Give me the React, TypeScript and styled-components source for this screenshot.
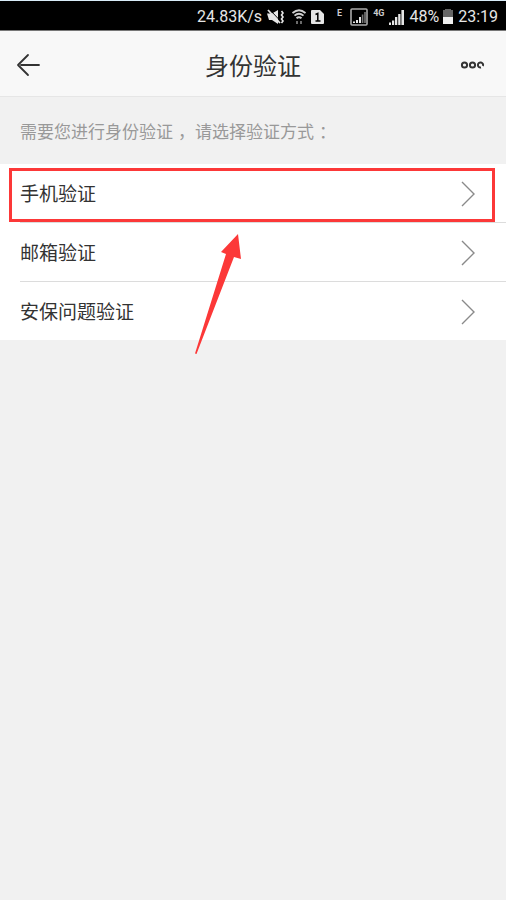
import React from "react";
import styled, { createGlobalStyle } from "styled-components";

const Global = createGlobalStyle`
  * { box-sizing: border-box; }
  body {
    margin: 0;
    background: #f1f1f1;
    font-family: Roboto, "Noto Sans CJK SC", sans-serif;
    color: #333;
  }
  button { font: inherit; color: inherit; background: none; border: 0; padding: 0; cursor: pointer; }
  svg { display: block; flex: none; }
`;

const Screen = styled.div`
  min-height: 100vh;
`;

const StatusBar = styled.div`
  height: 31px;
  display: flex;
  align-items: center;
  justify-content: flex-end;
  padding: 2px 8px 0 0;
  background: #000;
  border-top: 1px solid #d9ecf8;
  border-bottom: 1px solid #777;
  color: #e6e6e6;
  font-size: 16px;
  line-height: 28px;
  white-space: nowrap;
`;

const StatusItem = styled.span<{ $gap: number }>`
  margin-left: ${(p) => p.$gap}px;
`;

const NetLabel = styled.span<{ $gap: number }>`
  margin-left: ${(p) => p.$gap}px;
  align-self: flex-start;
  font-size: 9px;
  line-height: 21px;
  font-weight: 700;
  color: #ccc;
`;

const NavBar = styled.header`
  display: grid;
  grid-template-columns: 80px 1fr 80px;
  align-items: center;
  height: 66px;
  padding-top: 2px;
  background: #f8f8f8;
  border-bottom: 1px solid #e6e6e6;
`;

const NavButton = styled.button<{ $end?: boolean }>`
  display: flex;
  align-items: center;
  height: 60px;
  && { padding: 0 ${(p) => (p.$end ? 21 : 0)}px 0 ${(p) => (p.$end ? 0 : 16)}px; }
  justify-content: ${(p) => (p.$end ? "flex-end" : "flex-start")};
`;

const Title = styled.h1`
  margin: 0;
  padding-top: 4px;
  text-align: center;
  font-size: 24px;
  line-height: 36px;
  font-weight: 400;
`;

const Hint = styled.p`
  margin: 0;
  padding: 22px 20px 18px;
  font-size: 17px;
  line-height: 27px;
  color: #999;
`;

const Punct = styled.span`
  padding-left: 5px;
`;

const List = styled.ul`
  margin: 0;
  padding: 0 0 0 20px;
  list-style: none;
  background: #fff;
`;

const Item = styled.li`
  position: relative;
  & + & { border-top: 1px solid #dcdcdc; }
`;

const ItemButton = styled.button`
  display: flex;
  align-items: center;
  justify-content: space-between;
  width: 100%;
  height: 58px;
  && { padding: 2px 30px 0 0; }
  text-align: left;
`;

const ItemLabel = styled.span`
  padding-top: 2px;
  font-size: 19px;
  line-height: 28px;
`;

const Highlight = styled.div`
  position: absolute;
  top: 4px;
  left: -11px;
  right: 11px;
  bottom: 0;
  border: 3px solid #fc3838;
  pointer-events: none;
`;

const Pointer = styled.svg`
  position: absolute;
  top: 69px;
  left: 174px;
  z-index: 1;
  pointer-events: none;
`;

const BoxedSignal = () => (
  <svg width="18" height="18" viewBox="0 0 18 18" fill="#e6e6e6" aria-hidden="true">
    <rect x="1" y="1" width="16" height="16" rx="1" fill="none" stroke="#aaa" strokeWidth="1.6" />
    <path d="M3 13.500h2V15H3zM6 12h2v3H6zM9 9h2v6H9z" />
    <path d="M11.800 6.500h1.600V15h-1.600zM14.200 4h1.600v11h-1.600z" fill="#777" />
  </svg>
);

const Signal = () => (
  <svg width="15" height="16" viewBox="0 0 15 16" fill="#e6e6e6" aria-hidden="true">
    <path d="M0 13.500h2V16H0zM3 11.500h2.200V16H3zM6 8h2.300v8H6zM9.200 5h2.300v11H9.200zM12.400 1H15v15h-2.600z" />
  </svg>
);

const MuteIcon = () => (
  <svg width="18" height="16" viewBox="0 0 18 16" fill="#e6e6e6" aria-hidden="true">
    <path d="M0 4.500h5L11 1v14l-6-4H2z" />
    <path d="M3 1l10 10.500" stroke="#000" strokeWidth="1" />
    <path d="M1 1l12 13" stroke="#e6e6e6" strokeWidth="1.8" />
    <path d="M14.500 2l1.500 2-1.500 2 1.500 2-1.500 2 1.500 2-1.500 2" fill="none" stroke="#e6e6e6" strokeWidth="1.6" />
  </svg>
);

const WifiIcon = () => (
  <svg width="14" height="16" viewBox="0 0 14 16" fill="none" stroke="#d0d0d0" strokeWidth="1.8" aria-hidden="true">
    <path d="M.500 4Q7-1.500 13.500 4M2.500 6.700q4.500-4 9 0M4.500 9.300q2.500-2.200 5 0" />
    <path d="M5 12v3M9 12v3" stroke="#777" />
  </svg>
);

const SimIcon = () => (
  <svg width="13" height="14" viewBox="0 0 13 14" aria-hidden="true">
    <path d="M1 0h8l4 4v9q0 1-1 1H1q-1 0-1-1V1q0-1 1-1z" fill="#e6e6e6" />
    <path d="M4.500 4.500L6.800 3.500v7.500M4.500 11h5" fill="none" stroke="#000" strokeWidth="1.500" />
  </svg>
);

const BatteryIcon = () => (
  <svg width="10" height="15" viewBox="0 0 10 15" aria-hidden="true">
    <path d="M2 0h6v1h2v7H0V1h2z" fill="#666" />
    <path d="M0 8h10v7H0z" fill="#f0f0f0" />
  </svg>
);

const Chevron = () => (
  <svg width="16" height="26" viewBox="0 0 16 26" fill="none" stroke="#8a8a8a" strokeWidth="1.4" aria-hidden="true">
    <path d="M2 1l12 12L2 25" />
  </svg>
);

const methods = ["手机验证", "邮箱验证", "安保问题验证"];

export default function App() {
  return (
    <Screen>
      <Global />
      <StatusBar>
        <span>24.83K/s</span>
        <StatusItem $gap={5}><MuteIcon /></StatusItem>
        <StatusItem $gap={7}><WifiIcon /></StatusItem>
        <StatusItem $gap={5}><SimIcon /></StatusItem>
        <NetLabel $gap={13}>E</NetLabel>
        <StatusItem $gap={8}><BoxedSignal /></StatusItem>
        <NetLabel $gap={5}>4G</NetLabel>
        <StatusItem $gap={5}><Signal /></StatusItem>
        <StatusItem $gap={5}>48%</StatusItem>
        <StatusItem $gap={4}><BatteryIcon /></StatusItem>
        <StatusItem $gap={5}>23:19</StatusItem>
      </StatusBar>
      <NavBar>
        <NavButton aria-label="返回">
          <svg width="24" height="24" viewBox="0 0 24 24" fill="none" stroke="#333" strokeWidth="1.8" strokeLinecap="round" strokeLinejoin="round" aria-hidden="true">
            <path d="M12 2L2 12l10 10M5 12h18" />
          </svg>
        </NavButton>
        <Title>身份验证</Title>
        <NavButton $end aria-label="更多">
          <svg width="25" height="8" viewBox="0 0 25 8" fill="none" stroke="#333" strokeWidth="2" aria-hidden="true">
            <circle cx="4.500" cy="4" r="2.600" />
            <circle cx="12.500" cy="4" r="2.600" />
            <path d="M21 6.550A2.600 2.600 0 1 1 22.900 5" />
          </svg>
        </NavButton>
      </NavBar>
      <main>
        <Hint>
          需要您进行身份验证<Punct>，</Punct>请选择验证方式<Punct>：</Punct>
        </Hint>
        <List>
          {methods.map((name, i) => (
            <Item key={name}>
              <ItemButton>
                <ItemLabel>{name}</ItemLabel>
                <Chevron />
              </ItemButton>
              {i === 0 && (
                <>
                  <Highlight />
                  <Pointer width="50" height="122" viewBox="0 0 50 122" fill="#fc3838" aria-hidden="true">
                    <path d="M44 1L27 19l5 2L1 120.500l1.500.5L40 24l7 2z" />
                  </Pointer>
                </>
              )}
            </Item>
          ))}
        </List>
      </main>
    </Screen>
  );
}
